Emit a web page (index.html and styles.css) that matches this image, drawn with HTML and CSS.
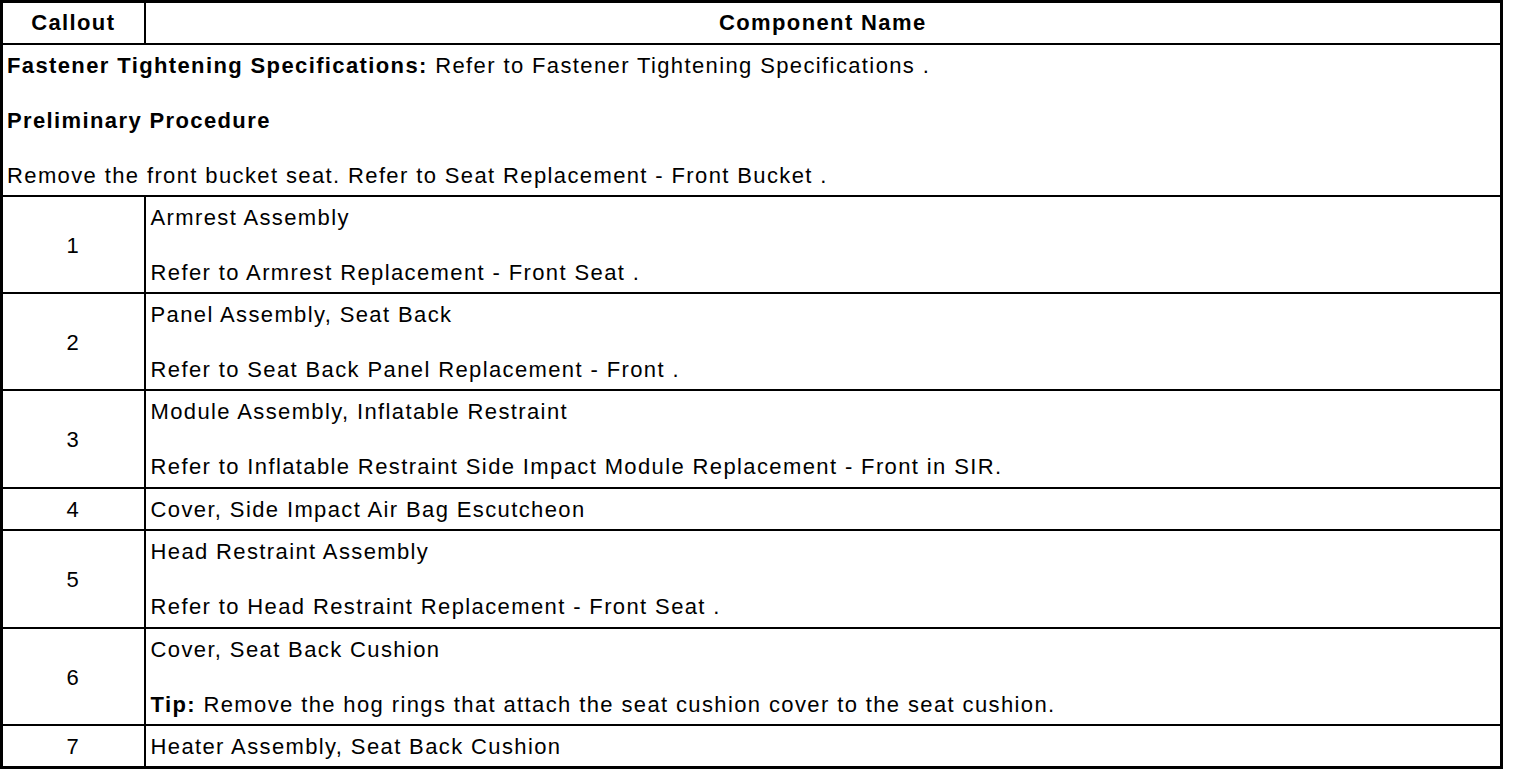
FILE: index.html
```html
<!DOCTYPE html>
<html>
<head>
<meta charset="utf-8">
<link rel="stylesheet" href="styles.css">
</head>
<body>
<table class="spec">
  <colgroup><col class="c1"><col class="c2"></colgroup>
  <thead>
    <tr><th>Callout</th><th>Component Name</th></tr>
  </thead>
  <tbody>
    <tr class="section"><td colspan="2">
      <p><b>Fastener Tightening Specifications:</b> Refer to Fastener Tightening Specifications .</p>
      <p><b>Preliminary Procedure</b></p>
      <p>Remove the front bucket seat. Refer to Seat Replacement - Front Bucket .</p>
    </td></tr>
    <tr><td class="num">1</td><td><p>Armrest Assembly</p><p>Refer to Armrest Replacement - Front Seat .</p></td></tr>
    <tr><td class="num">2</td><td><p>Panel Assembly, Seat Back</p><p>Refer to Seat Back Panel Replacement - Front .</p></td></tr>
    <tr class="tall"><td class="num">3</td><td><p>Module Assembly, Inflatable Restraint</p><p>Refer to Inflatable Restraint Side Impact Module Replacement - Front in SIR.</p></td></tr>
    <tr><td class="num">4</td><td><p>Cover, Side Impact Air Bag Escutcheon</p></td></tr>
    <tr class="tall"><td class="num">5</td><td><p>Head Restraint Assembly</p><p>Refer to Head Restraint Replacement - Front Seat .</p></td></tr>
    <tr><td class="num">6</td><td><p>Cover, Seat Back Cushion</p><p><b>Tip:</b> Remove the hog rings that attach the seat cushion cover to the seat cushion.</p></td></tr>
    <tr><td class="num">7</td><td><p>Heater Assembly, Seat Back Cushion</p></td></tr>
  </tbody>
</table>
</body>
</html>
```
FILE: styles.css
```css
html, body {
  margin: 0;
  padding: 0;
  background: #fff;
}
body {
  font-family: "Liberation Sans", Arial, sans-serif;
  font-size: 22px;
  letter-spacing: 1.38px;
  color: #000;
}
.spec {
  border-collapse: collapse;
  width: 1503px;
  border: 3px solid #000;
  table-layout: fixed;
}
.c1 { width: 143px; }
.spec th, .spec td {
  border: 2px solid #000;
  padding: 9px 5px 7px 5px;
  line-height: 24px;
  vertical-align: middle;
}
.spec tr.section td {
  padding-left: 4px;
}
.spec th {
  font-weight: bold;
  text-align: center;
  padding: 8px 5px;
}
.spec td.num {
  text-align: center;
}
.spec tr.tall td {
  padding-bottom: 8px;
}
.spec p {
  margin: 0;
}
.spec p + p {
  margin-top: 31px;
}
```
